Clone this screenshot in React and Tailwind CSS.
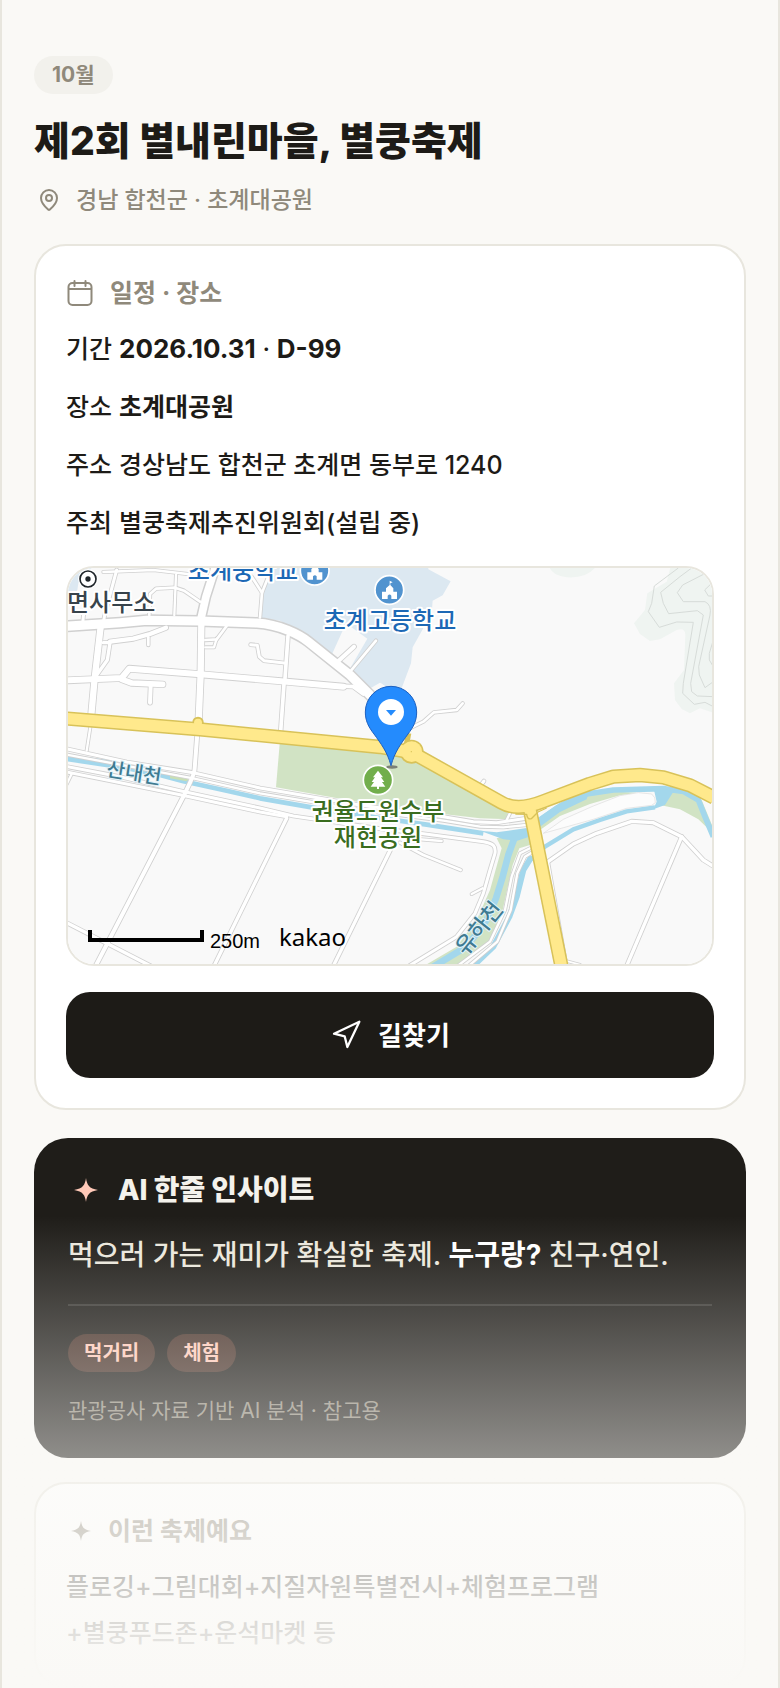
// src/pages/FestivalDetailPage.jsx
import React from 'react';
import { MapPin, Navigation } from 'lucide-react';

const festival = {
  month: '10월',
  title: '제2회 별내린마을, 별쿵축제',
  region: '경남 합천군 · 초계대공원',
  date: '2026.10.31',
  dday: 'D-99',
  place: '초계대공원',
  address: '경상남도 합천군 초계면 동부로 1240',
  host: '별쿵축제추진위원회(설립 중)',
  tags: ['먹거리', '체험'],
  programs: ['플로깅+그림대회+지질자원특별전시+체험프로그램', '+별쿵푸드존+운석마켓 등'],
};

// ===== Map data: [path, outer width] =====
const ROADS = [
  ['M130 36L280 30L408 45', 12],
  ['M170 30L135 160L128 200', 14],
  ['M72 150L68 190', 14],
  ['M348 45L343 165', 12],
  ['M268 165L270 102L288 86L345 83L372 92L420 125', 13],
  ['M575 50L606 98L600 172', 13],
  ['M625 50L606 98', 13],
  ['M122 200L104 355L94 465', 24],
  ['M92 495L80 572', 12],
  ['M265 232L265 255', 13],
  ['M110 345L142 300L150 248L130 248', 15],
  ['M150 245L220 236L270 222L318 203', 18],
  ['M500 198L470 238L436 240', 13],
  ['M470 236L462 262L436 262', 12],
  ['M572 254L592 256L598 290L612 302L672 309', 14],
  ['M684 228L675 355', 16],
  ['M672 372L662 515', 16],
  ['M838 378L880 380L910 402', 16],
  ['M836 302L882 260', 17],
  ['M868 338L948 242', 13],
  ['M0 362L185 354L208 326L422 343L680 365L850 380', 23],
  ['M185 358L215 369L308 373', 22],
  ['M272 378L270 428', 17],
  ['M424 190L422 340L416 480', 24],
  ['M412 520L404 625C404 645 395 655 375 700L108 1216', 17],
  ['M422 180L438 110L470 10', 32],
  ['M0 200L180 188L260 181L420 183L590 189C660 193 720 225 745 245L870 345L960 435', 36],
  ['M1055 502L1090 485L1122 457L1190 450L1208 430', 13],
  ['M0 562L200 606L400 638L600 684L900 735L1150 770L1240 785L1310 788L1400 775', 14],
  ['M0 580L180 614L400 655L600 700L900 750L1150 782L1260 800L1330 802L1400 795', 12],
  ['M0 616L180 650L360 692L600 744L700 768L960 806L1080 820L1270 845C1300 850 1308 858 1305 880L1290 930L1270 1000L1245 1060L1190 1130L1050 1216', 14],
  ['M20 636L360 704L600 756L680 770', 14],
  ['M20 672L36 640', 12],
  ['M680 775L462 1218', 15],
  ['M995 862L820 1218', 15],
  ['M1020 848L1090 885L1202 930', 13],
  ['M1020 833L1145 843', 12],
  ['M1235 1002L1268 985', 12],
  ['M0 1078L280 1222', 15],
  ['M1195 1216L1290 1145L1335 1050L1355 950L1380 880L1410 865', 12],
  ['M1228 1216L1312 1145L1352 1050L1372 940L1395 890L1425 872', 12],
  ['M1340 780L1350 760', 12],
  ['M1460 908L1540 852L1610 820L1715 784L1780 788L1865 830L1930 900L1962 920', 15],
  ['M1865 830L1700 1218', 15],
  ['M1465 905L1520 1216', 10],
  ['M1515 1202L1560 1214', 10],
  ['M1262 676L1272 663', 14],
];

const YELLOW_ROADS = [
  'M0 474L420 508L960 561L1055 577L1325 728C1360 748 1400 744 1450 724L1588 672L1660 650L1740 645L1810 652L1890 676L1962 713',
  'M1410 750L1505 1222',
];

const CONTOURS = [
  'M1855 24L1783 78L1775 130L1765 155L1798 202L1850 186L1900 187L1870 370L1868 400L1903 433L1935 427L1960 440',
  'M1895 24L1860 50L1802 97L1810 130L1826 161L1912 152L1930 165L1892 370L1895 395L1912 408L1960 410',
  'M1940 38L1868 75L1852 98L1870 125L1935 125Q1956 135 1950 165L1916 320L1918 345L1935 383L1960 365',
  'M1960 65L1934 90L1945 108L1960 108',
  'M1960 240L1948 280L1948 300L1960 320',
];

const SchoolMarker = ({ x, y }) => (
  <g transform={`translate(${x} ${y})`}>
    <circle r="43" fill="#5193cf" stroke="#fff" strokeWidth="5" />
    <path
      d="M-22 27V5H-10V-5L1 -15V-28L10 -23L3 -20V-15L12 -5V5H23V27H6V17Q1 10 -5 17V27Z"
      fill="#fff"
    />
  </g>
);

const VenueMap = () => (
  <svg
    viewBox="0 0 644 396"
    preserveAspectRatio="xMidYMid slice"
    className="block h-[396px] w-full"
    role="img"
    aria-label="초계대공원 지도"
  >
    <rect width="644" height="396" fill="#f9f9f9" />
    <g transform="translate(-8 -8) scale(0.33333)" strokeLinejoin="round" fill="none">
      {/* Land use */}
      <path d="M24 24H95L55 70L52 90L24 130Z" fill="#dce8f1" />
      <path d="M645 20L612 90L606 100L604 174L660 182L740 228L800 280L870 340L935 400L960 368L985 385H1025L1053 310L1058 262L1115 160L1118 122L1148 106L1172 64L1105 28V20Z" fill="#dce8f1" />
      <path d="M815 285L858 190L922 236L866 332Z" fill="#f9f9f9" />
      <path d="M905 400L960 368L1000 395L950 440Z" fill="#f9f9f9" />
      <path d="M660 540L1060 585L1340 745L1348 778L1260 775L1130 760L900 727L648 682Z" fill="#d1e3c4" />
      <path d="M1832 20L1820 65L1762 100L1755 150L1722 190L1740 222L1770 243L1800 238L1850 210Q1876 202 1876 225L1872 330L1842 370L1845 420L1865 447L1890 460L1920 445L1960 458V20Z" fill="#eff4f1" />
      <path d="M1468 20Q1475 46 1520 52Q1580 56 1608 20Z" fill="#eff4f1" />
      {CONTOURS.map((d) => (
        <path key={d} d={d} stroke="#d6dbd8" strokeWidth="3" />
      ))}

      {/* River banks and water */}
      <path d="M1310 835L1325 865L1290 990L1250 1080L1190 1160L1095 1216H1200L1290 1140L1328 1050L1358 915L1378 865L1410 855V810Z" fill="#d1e3c4" />
      <path d="M1440 810L1500 768L1590 732L1680 706L1730 698L1580 690L1440 780Z" fill="#d1e3c4" />
      <path d="M1800 735L1860 748L1915 778L1940 802L1958 830V800L1925 720L1860 690H1820Z" fill="#d1e3c4" />
      <g stroke="#a3d7ec">
        <path d="M0 590L150 612" strokeWidth="22" />
        <path d="M140 612L300 645L370 664L500 692L600 715L755 742L960 774L1100 794L1270 820" strokeWidth="14" />
        <path d="M1365 830L1345 885L1328 950L1308 1015L1280 1080L1220 1160L1110 1226" strokeWidth="20" />
        <path d="M1235 1222L1300 1160L1348 1070L1370 1010L1390 930L1415 890" strokeWidth="18" />
        <path d="M1405 905L1455 860L1540 808L1620 780L1700 754L1785 742" strokeWidth="13" />
        <path d="M1425 790L1490 745L1580 702L1660 690L1810 686L1870 694L1915 720L1935 770L1960 830" strokeWidth="17" />
      </g>
      <path d="M1500 728L1590 686L1580 718L1500 756L1440 800V770Z" fill="#a3d7ec" />
      <path d="M1260 812L1310 817L1400 804L1408 830L1372 842L1330 838Z" fill="#a3d7ec" />
      <path d="M1782 690L1845 688L1815 735L1780 748L1790 725Z" fill="#a3d7ec" />
      <path
        d="M1450 820L1510 778L1600 738L1680 707L1735 698L1775 702Q1788 712 1786 728L1775 736L1700 745L1600 778Z"
        fill="#fcfcfc"
        stroke="#dcdcdc"
        strokeWidth="2"
      />
      <path d="M330 645L385 658L380 664L330 655Z" fill="#c9dfb4" />

      {/* Roads: casings first so that the junctions stay open */}
      <g stroke="#d0d0d0" strokeLinecap="round">
        {ROADS.map(([d, w]) => (
          <path key={d} d={d} strokeWidth={w} />
        ))}
      </g>
      <g stroke="#fff" strokeLinecap="round">
        {ROADS.map(([d, w]) => (
          <path key={d} d={d} strokeWidth={w > 30 ? w - 9 : w - 5} />
        ))}
      </g>
      <g stroke="#d8c259">
        {YELLOW_ROADS.map((d) => (
          <path key={d} d={d} strokeWidth="43" />
        ))}
        <path d="M1038 560L1046 520" strokeWidth="16" />
      </g>
      <circle cx="414" cy="487" r="17" fill="#d8c259" />
      <circle cx="1055" cy="575" r="36" fill="#d8c259" />
      <g stroke="#ffe98c">
        {YELLOW_ROADS.map((d) => (
          <path key={d} d={d} strokeWidth="34" />
        ))}
      </g>
      <circle cx="414" cy="488" r="12" fill="#ffe98c" />
      <circle cx="1055" cy="575" r="31" fill="#ffe98c" />
      <circle cx="1054" cy="575" r="2" fill="#d8c259" />
      <path d="M1366 762L1400 763Q1402 780 1414 776L1434 756L1460 744" stroke="#d8c259" strokeWidth="4" />

      {/* Points of interest */}
      <circle cx="84" cy="57" r="24" fill="#fff" stroke="#fff" strokeWidth="12" />
      <circle cx="84" cy="57" r="24" stroke="#20262b" strokeWidth="5" />
      <circle cx="84" cy="57" r="8" fill="#20262b" />
      <SchoolMarker x={764} y={32} />
      <SchoolMarker x={988} y={90} />
      <circle cx="954" cy="660" r="44" fill="#72ae4c" stroke="#fff" strokeWidth="5" />
      <path d="M954 632L969 652H963L973 666H966L976 680H957V687H951V680H932L942 666H935L945 652H939Z" fill="#fff" />

      {/* Venue pin */}
      <ellipse cx="996" cy="621" rx="17" ry="5" fill="#555" opacity="0.7" />
      <path d="M993 617C982 575 962 550 942 522C925 500 916 482 916 456A77 77 0 0 1 1070 456C1070 482 1061 500 1044 522C1024 550 1004 575 993 617Z" fill="#248bfd" stroke="#1b5fc0" strokeWidth="3" />
      <circle cx="993" cy="456" r="39" fill="#fff" />
      <path d="M978 450H1008L993 467Z" fill="#248bfd" />
      <path d="M90 1110V1140H426V1110" stroke="#000" strokeWidth="12" strokeLinejoin="miter" />
    </g>

    <g
      className="font-['Noto_Sans_CJK_KR',sans-serif] text-2xl font-medium"
      stroke="#fff"
      strokeWidth="4"
      strokeLinejoin="round"
      paintOrder="stroke"
    >
      <text x="-1" y="43" fill="#38434b">면사무소</text>
      <text x="175" y="11" textAnchor="middle" fill="#1c68b5">초계중학교</text>
      <text x="322" y="61" textAnchor="middle" fill="#1c68b5">초계고등학교</text>
      <text y="252" textAnchor="middle" fill="#3a6d1f">
        <tspan x="310">권율도원수부</tspan>
        <tspan x="310" dy="26">재현공원</tspan>
      </text>
    </g>
    <g
      className="font-['Noto_Sans_CJK_KR',sans-serif] text-[20px] font-medium"
      stroke="#e2f2f9"
      strokeWidth="2"
      paintOrder="stroke"
      textAnchor="middle"
      fill="#3f7b92"
    >
      <text transform="translate(65 212) rotate(9)">산내천</text>
      <text transform="translate(417 365) rotate(-51)" className="text-[22px]">유하천</text>
    </g>
    <text x="142" y="380" className="font-['Liberation_Sans',sans-serif] text-[20px]">250m</text>
    <text x="211" y="378" className="font-['Noto_Sans',sans-serif] text-2xl">kakao</text>
  </svg>
);

const CalendarIcon = () => (
  <svg viewBox="0 0 28 28" className="size-7" fill="none" stroke="currentColor" strokeWidth="2" strokeLinecap="round">
    <rect x="2.5" y="4" width="23" height="22" rx="4" />
    <path d="M3 10H25M8.500 2V7M19.500 2V7" />
  </svg>
);

const Sparkle = ({ className }) => (
  <svg viewBox="0 0 24 24" className={className} fill="currentColor" aria-hidden="true">
    <path d="M12 0C13 7 15 10.500 24 12C15 13.500 13 17 12 24C11 17 9 13.500 0 12C9 10.500 11 7 12 0Z" />
  </svg>
);

const InfoRow = ({ label, children }) => (
  <div className="flex gap-[7px]">
    <dt>{label}</dt>
    <dd>{children}</dd>
  </div>
);

// ===== Page =====
const App = () => (
  <div className="relative min-h-screen overflow-hidden border-x-2 border-[#e8e6de] bg-[#faf9f6] px-8 pt-14 font-['Inter','Noto_Sans_CJK_KR',sans-serif] text-[#1d1b17]">
    <header>
      <span className="inline-flex h-[38px] items-center rounded-full bg-[#f2f1ec] px-[18px] text-[21px] font-bold text-[#8f897b]">
        {festival.month}
      </span>
      <h1 className="mt-5 text-[39px] leading-[54px] font-extrabold">{festival.title}</h1>
      <p className="mt-4 flex items-center gap-3 text-[23px] leading-8 font-medium text-[#8f897b]">
        <span className="flex w-[30px] justify-center">
          <MapPin className="size-6" strokeWidth={2} />
        </span>
        {festival.region}
      </p>
    </header>

    <main>
      <section className="mt-7 rounded-[32px] border-2 border-[#e8e6de] bg-white p-[30px]">
        <h2 className="flex items-center gap-4 text-[25px] leading-[34px] font-bold text-[#8f897b]">
          <CalendarIcon />
          일정 · 장소
        </h2>
        <dl className="mt-[18px] flex flex-col gap-4 text-[25px] leading-[42px] font-medium">
          <InfoRow label="기간">
            <strong className="text-[26px]">{festival.date}</strong> ·{' '}
            <strong className="text-[26px]">{festival.dday}</strong>
          </InfoRow>
          <InfoRow label="장소">
            <strong>{festival.place}</strong>
          </InfoRow>
          <InfoRow label="주소">{festival.address}</InfoRow>
          <InfoRow label="주최">{festival.host}</InfoRow>
        </dl>
        <div className="mt-[22px] overflow-hidden rounded-[28px] border-2 border-[#e8e6de]">
          <VenueMap />
        </div>
        <button
          type="button"
          className="mt-[26px] flex h-[86px] w-full items-center justify-center gap-4 rounded-3xl bg-[#1d1b17] text-[26px] font-bold text-white"
        >
          <Navigation className="size-8" strokeWidth={1.7} />
          길찾기
        </button>
      </section>

      <section className="mt-7 rounded-[34px] bg-[#1f1d19] px-[34px] pt-[34px] pb-8">
        <h2 className="flex items-center gap-[14px] text-[28px] leading-9 font-extrabold text-[#f4f2ec]">
          <span className="flex w-9 justify-center">
            <Sparkle className="size-6 text-[#ffc9b8]" />
          </span>
          AI 한줄 인사이트
        </h2>
        <p className="mt-6 text-[28px] leading-[46px] font-medium text-[#ebe7dc]">
          먹으러 가는 재미가 확실한 축제. <strong className="text-white">누구랑?</strong> 친구·연인.
        </p>
        <ul className="mt-[26px] flex gap-3 border-t-2 border-white/12 pt-7">
          {festival.tags.map((tag) => (
            <li
              key={tag}
              className="flex h-[38px] items-center rounded-full bg-[#ff8f70]/18 px-4 text-[20px] font-bold text-[#ffc9b8]"
            >
              {tag}
            </li>
          ))}
        </ul>
        <p className="mt-6 text-[21px] leading-[30px] text-[#8f897b]">관광공사 자료 기반 AI 분석 · 참고용</p>
      </section>

      <section className="mt-6 rounded-[32px] border-2 border-[#e8e6de] bg-white p-[30px]">
        <h2 className="flex items-center gap-3 text-[25px] leading-[34px] font-bold text-[#8f897b]">
          <span className="flex w-[30px] justify-center">
            <Sparkle className="size-5" />
          </span>
          이런 축제예요
        </h2>
        <p className="mt-4 text-[25px] leading-[46px] font-medium">
          {festival.programs.map((line) => (
            <span key={line} className="block">{line}</span>
          ))}
        </p>
      </section>
    </main>

    {/* Fade over the part that continues below */}
    <div className="pointer-events-none absolute -inset-x-0.5 bottom-0 h-[472px] bg-linear-to-b from-[#faf9f6]/0 to-[#faf9f6]" />
  </div>
);

export default App;
